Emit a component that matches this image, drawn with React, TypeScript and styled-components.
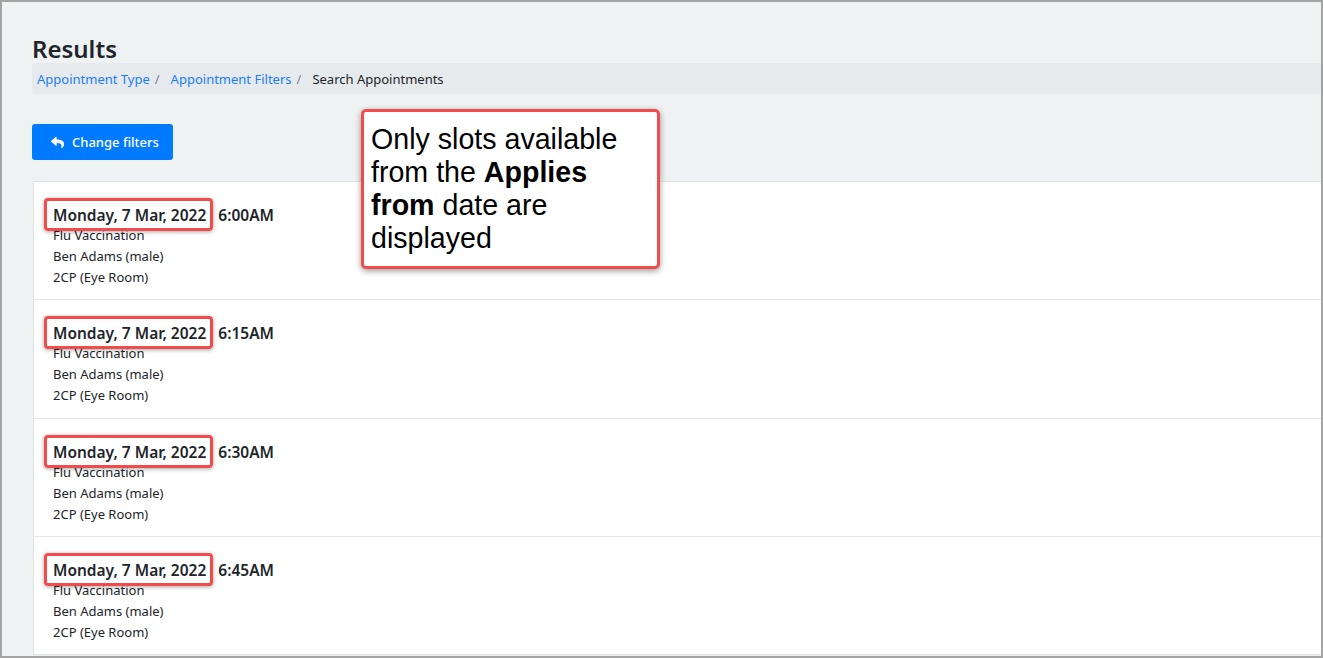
import React from "react";
import styled, { createGlobalStyle } from "styled-components";
import { FaReply } from "react-icons/fa";

const GlobalStyle = createGlobalStyle`
  html, body {
    margin: 0;
    padding: 0;
    background: #ffffff;
  }
  * {
    box-sizing: border-box;
  }
`;

interface Slot {
  date: string;
  time: string;
  service: string;
  clinician: string;
  room: string;
}

const slots: Slot[] = [
  { date: "Monday, 7 Mar, 2022", time: "6:00AM", service: "Flu Vaccination", clinician: "Ben Adams (male)", room: "2CP (Eye Room)" },
  { date: "Monday, 7 Mar, 2022", time: "6:15AM", service: "Flu Vaccination", clinician: "Ben Adams (male)", room: "2CP (Eye Room)" },
  { date: "Monday, 7 Mar, 2022", time: "6:30AM", service: "Flu Vaccination", clinician: "Ben Adams (male)", room: "2CP (Eye Room)" },
  { date: "Monday, 7 Mar, 2022", time: "6:45AM", service: "Flu Vaccination", clinician: "Ben Adams (male)", room: "2CP (Eye Room)" },
];

const crumbs = [
  { label: "Appointment Type", active: false },
  { label: "Appointment Filters", active: false },
  { label: "Search Appointments", active: true },
];

const App = () => (
  <>
    <GlobalStyle />
    <Frame>
      <Title>Results</Title>
      <Breadcrumb>
        {crumbs.map((c) => (
          <Crumb key={c.label} active={c.active}>
            {c.label}
          </Crumb>
        ))}
      </Breadcrumb>
      <ChangeButton>
        <FaReply size={13} />
        Change filters
      </ChangeButton>
      <SlotList>
        {slots.map((s) => (
          <SlotRow key={s.time}>
            <SlotHeading>
              <SlotDate>{s.date}</SlotDate>
              <span>{s.time}</span>
            </SlotHeading>
            <SlotDetail>{s.service}</SlotDetail>
            <SlotDetail>{s.clinician}</SlotDetail>
            <SlotDetail>{s.room}</SlotDetail>
          </SlotRow>
        ))}
      </SlotList>
      <Callout>
        Only slots available from the <b>Applies from</b> date are displayed
      </Callout>
    </Frame>
  </>
);

export default App;

const Frame = styled.div`
  position: relative;
  width: 1323px;
  height: 658px;
  overflow: hidden;
  border: 2px solid #a3a3a3;
  background: #eff2f3;
  padding: 32px 0 0 30px;
  font-family: "Segoe UI", "Noto Sans", "Open Sans", sans-serif;
  color: #212529;
`;

const Title = styled.h1`
  margin: 0;
  font-size: 24px;
  line-height: 29px;
  font-weight: 600;
  color: #212529;
`;

const Breadcrumb = styled.nav`
  display: flex;
  align-items: center;
  height: 31px;
  padding: 0 5px;
  background: #e6eaed;
  border-radius: 4px 0 0 4px;
  font-size: 13px;
`;

const Crumb = styled.span<{ active: boolean }>`
  color: ${({ active }) => (active ? "#212529" : "#1a7efb")};
  &:not(:last-child)::after {
    content: "/";
    color: #7a8590;
    margin: 0 11px 0 5px;
  }
`;

const ChangeButton = styled.button`
  display: inline-flex;
  align-items: center;
  gap: 8px;
  height: 36px;
  margin-top: 30px;
  padding: 0 14px 0 19px;
  border: none;
  border-radius: 3px;
  background: #007bff;
  color: #ffffff;
  font-family: inherit;
  font-size: 13px;
  font-weight: 500;
`;

const SlotList = styled.div`
  margin-top: 21px;
  margin-left: 1px;
  background: #ffffff;
  border: 1px solid #dfe3e6;
  border-right: none;
`;

const SlotRow = styled.div`
  padding: 23px 20px 11.33px 19px;
  border-bottom: 1px solid #e2e6e9;
  &:last-child {
    border-bottom: none;
  }
`;

const SlotHeading = styled.div`
  display: flex;
  gap: 12px;
  font-size: 15.5px;
  line-height: 20px;
  font-weight: 600;
`;

const SlotDate = styled.span`
  position: relative;
  &::after {
    content: "";
    position: absolute;
    inset: -7px -7px -6px -9px;
    border: 3px solid #f14b4b;
    border-radius: 4px;
    box-shadow: 0 1px 4px rgba(0, 0, 0, 0.35);
  }
`;

const SlotDetail = styled.div`
  font-size: 13px;
  line-height: 21px;
`;

const Callout = styled.div`
  position: absolute;
  left: 359px;
  top: 107px;
  width: 299px;
  height: 160px;
  padding: 11px 7px 9px;
  background: #ffffff;
  border: 3px solid #f14b4b;
  border-radius: 5px;
  box-shadow: 0 2px 6px rgba(0, 0, 0, 0.4);
  font-family: "Liberation Sans", Arial, sans-serif;
  font-size: 28.6px;
  line-height: 33px;
  color: #000000;
`;
